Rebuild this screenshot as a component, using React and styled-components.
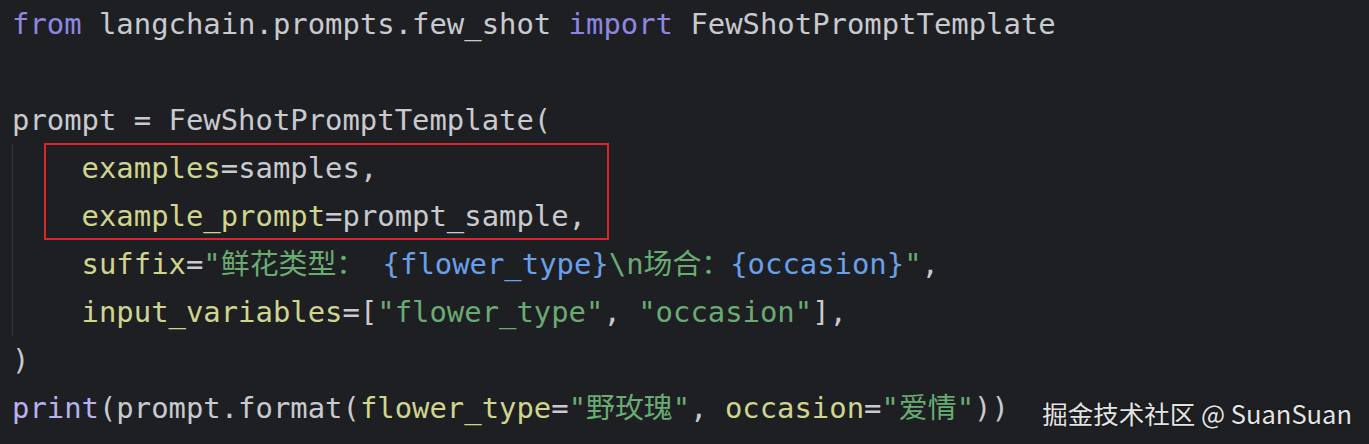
import React from 'react';
import styled, { createGlobalStyle } from 'styled-components';

const GlobalStyle = createGlobalStyle`
  html, body {
    margin: 0;
    padding: 0;
    background: #1e1f22;
  }
`;

const Editor = styled.div`
  position: relative;
  width: 1369px;
  height: 444px;
  overflow: hidden;
  background: #1e1f22;
  padding: 0 0 0 12px;
  box-sizing: border-box;
  font-family: "DejaVu Sans Mono", "Liberation Mono", "Noto Sans CJK SC", monospace;
  font-size: 28.9px;
  color: #c8cad0;
`;

const Line = styled.div`
  height: 48px;
  line-height: 48px;
  white-space: pre;
`;

const Block = styled.div`
  box-shadow: inset 1px 0 0 #34363b;
`;

const Highlight = styled.div`
  position: relative;

  &::before {
    content: '';
    position: absolute;
    left: 32px;
    top: -1px;
    width: 565px;
    height: 97px;
    box-sizing: border-box;
    border: 2px solid #d8262c;
    pointer-events: none;
  }
`;

const Tok = styled.span`
  color: ${(p) =>
    ({
      kw: '#8e87e2',
      builtin: '#b8b1f0',
      arg: '#cfd58f',
      str: '#6aab73',
      brace: '#6aa0ea',
    }[p.$t] || '#c8cad0')};
`;

const Watermark = styled.div`
  position: absolute;
  right: 17px;
  bottom: 16px;
  font-family: "Noto Sans CJK SC", "Noto Sans", sans-serif;
  font-size: 25.5px;
  line-height: 30px;
  color: #e4e4e4;
  text-shadow: 0 0 2px rgba(0, 0, 0, 0.6);
`;

export default function App() {
  return (
    <>
      <GlobalStyle />
      <Editor>
        <Line>
          <Tok $t="kw">from</Tok> langchain.prompts.few_shot <Tok $t="kw">import</Tok> FewShotPromptTemplate
        </Line>
        <Line> </Line>
        <Line>prompt = FewShotPromptTemplate(</Line>
        <Block>
          <Highlight>
            <Line>
              {'    '}<Tok $t="arg">examples</Tok>=samples,
            </Line>
            <Line>
              {'    '}<Tok $t="arg">example_prompt</Tok>=prompt_sample,
            </Line>
          </Highlight>
          <Line>
            {'    '}<Tok $t="arg">suffix</Tok>=<Tok $t="str">"鲜花类型： </Tok>
            <Tok $t="brace">{'{flower_type}'}</Tok>
            <Tok $t="str">\n场合：</Tok>
            <Tok $t="brace">{'{occasion}'}</Tok>
            <Tok $t="str">"</Tok>,
          </Line>
          <Line>
            {'    '}<Tok $t="arg">input_variables</Tok>=[<Tok $t="str">"flower_type"</Tok>, <Tok $t="str">"occasion"</Tok>],
          </Line>
        </Block>
        <Line>)</Line>
        <Line>
          <Tok $t="builtin">print</Tok>(prompt.format(<Tok $t="arg">flower_type</Tok>=<Tok $t="str">"野玫瑰"</Tok>, <Tok $t="arg">occasion</Tok>=<Tok $t="str">"爱情"</Tok>))
        </Line>
        <Watermark>掘金技术社区 @ SuanSuan</Watermark>
      </Editor>
    </>
  );
}
